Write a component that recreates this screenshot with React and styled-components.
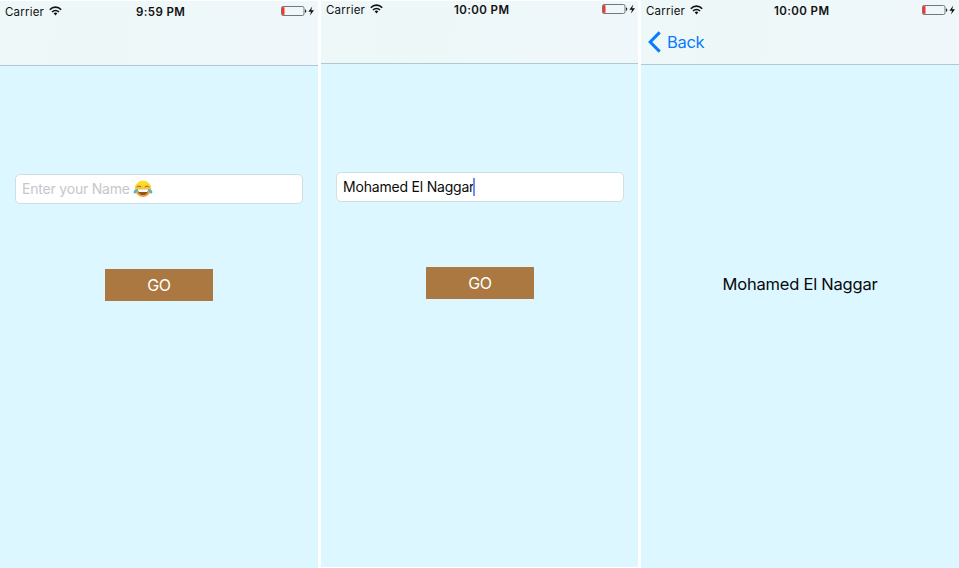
import React from "react";
import styled, { createGlobalStyle } from "styled-components";

const GlobalStyle = createGlobalStyle`
  * { box-sizing: border-box; }
  body { margin: 0; background: #fff; font-family: Inter, "Liberation Sans", sans-serif; overflow: hidden; }
`;

const Screens = styled.main`
  display: grid;
  grid-template-columns: 318px 317px 318px;
  column-gap: 3px;
  align-items: start;
  width: 959px;
  height: 568px;
`;

const Phone = styled.section`
  display: flex;
  flex-direction: column;
  align-items: flex-start;
  margin-top: ${(p) => p.$top}px;
  height: ${(p) => p.$height}px;
  background: #dcf7ff;
  overflow: hidden;
`;

const Header = styled.header`
  width: 100%;
  height: ${(p) => p.$height}px;
  flex: none;
  background: linear-gradient(100deg, #eef8f8, #eff7fa);
  border-bottom: 1px solid #b0c9d2;
`;

const StatusBar = styled.div`
  display: grid;
  grid-template-columns: 44px 87px 145px auto;
  align-items: center;
  height: 20px;
  padding-left: 5px;
  margin-top: ${(p) => p.$shift}px;
  color: #111;
  white-space: nowrap;
`;

const Carrier = styled.span`
  font-size: 11.5px;
  line-height: 18px;
  padding-top: 1px;
  letter-spacing: 0.2px;
`;

const Time = styled.span`
  font-size: 11.5px;
  font-weight: 600;
  line-height: 18px;
  padding-top: 1px;
  letter-spacing: 0.4px;
  margin-left: ${(p) => p.$offset}px;
`;

const Icon = styled.svg`
  display: block;
  flex: none;
`;

const BackButton = styled.button`
  display: flex;
  align-items: center;
  gap: 6px;
  height: 44px;
  margin: 0;
  padding: 0 0 0 7px;
  border: 0;
  background: none;
  color: #087cfb;
  font: 400 16.5px/44px Inter, sans-serif;
  letter-spacing: -0.3px;
`;

const Field = styled.div`
  display: flex;
  align-items: center;
  width: 288px;
  height: 30px;
  margin: 108px 0 0 15px;
  padding-left: 6px;
  background: #fff;
  border: 1px solid #d0dfe2;
  border-radius: 5px;
  white-space: nowrap;
`;

const FieldText = styled.span`
  font-size: 14px;
  line-height: 20px;
  letter-spacing: ${(p) => p.$track}px;
  margin-right: ${(p) => (p.$placeholder ? 3 : -1)}px;
  color: ${(p) => (p.$placeholder ? "#c5c7cb" : "#0b0b0b")};
`;

const Caret = styled.span`
  width: 2px;
  height: 18px;
  background: #6f8df3;
`;

const GoButton = styled.button`
  width: 108px;
  height: 32px;
  margin: 65px 0 0 105px;
  padding: 0;
  border: 0;
  background: #aa7840;
  color: #fff;
  font: 400 16px/32px Inter, sans-serif;
  letter-spacing: -0.4px;
`;

const Name = styled.p`
  width: 100%;
  margin: 209px 0 0;
  text-align: center;
  color: #07090a;
  font-size: 16.5px;
  line-height: 21px;
  letter-spacing: -0.22px;
`;

const Wifi = () => (
  <Icon width="13" height="10" viewBox="0 0 13 10">
    <g fill="none" stroke="#111" strokeWidth="1.6">
      <path d="M.8 3.7C3.9.3 9.1.3 12.2 3.7" />
      <path d="M3 6C5 4 8 4 10 6" />
    </g>
    <path d="M4.6 7.3Q6.5 5.9 8.4 7.3L6.5 9.4Z" fill="#111" />
  </Icon>
);

const Battery = () => (
  <Icon width="34" height="12" viewBox="0 0 34 12">
    <rect x=".5" y="1.5" width="22.5" height="9" rx="1.6" fill="none" stroke="#727878" />
    <path d="M1 2.2h2.5v7.6H1z" fill="#fb3328" />
    <path d="M24 4.2q1.3.4 1.3 1.8T24 7.8Z" fill="#222" />
    <path d="M31.2 1.5L27.4 6.7H30L29 10.5L33 5.3H30.2Z" fill="#111" />
  </Icon>
);

const Joy = () => (
  <Icon width="20" height="18" viewBox="0 0 20 18">
    <defs>
      <linearGradient id="joyFace" x2="0" y2="1">
        <stop stopColor="#ffe52e" />
        <stop offset=".6" stopColor="#fbc52b" />
        <stop offset="1" stopColor="#e9952b" />
      </linearGradient>
    </defs>
    <circle cx="10" cy="8.7" r="8.2" fill="url(#joyFace)" />
    <path d="M4.4 9.2H15.6Q15 15 10 15T4.4 9.2Z" fill="#8a5428" />
    <path d="M4.7 9.3H15.3Q14.8 11.6 14.2 12H5.8Q5.2 11.6 4.7 9.3Z" fill="#fff" />
    <path d="M4 6.8Q5.8 4.9 8 6.8M12 6.8Q14.2 4.9 16 6.8" fill="none" stroke="#9a6426" strokeWidth="1" strokeLinecap="round" />
    <path d="M4.6 9C2 9.2.2 11 .6 12.6C1 14.2 4.2 14 4.6 9ZM15.4 9C18 9.2 19.8 11 19.4 12.6C19 14.2 15.8 14 15.4 9Z" fill="#42b4e7" />
  </Icon>
);

const Chevron = () => (
  <Icon width="13" height="22" viewBox="0 0 13 22">
    <path d="M11.7 1.4L2.2 11L11.7 20.6" fill="none" stroke="#087cfb" strokeWidth="3" />
  </Icon>
);

const Status = ({ time, shift, offset }) => (
  <StatusBar $shift={shift}>
    <Carrier>Carrier</Carrier>
    <Wifi />
    <Time $offset={offset}>{time}</Time>
    <Battery />
  </StatusBar>
);

export default function App() {
  return (
    <>
      <GlobalStyle />
      <Screens>
        <Phone $top={1} $height={567}>
          <Header $height={65}>
            <Status time="9:59 PM" shift={0} offset={0} />
          </Header>
          <Field>
            <FieldText $placeholder $track={-0.2}>Enter your Name</FieldText>
            <Joy />
          </Field>
          <GoButton>GO</GoButton>
        </Phone>
        <Phone $top={1} $height={566}>
          <Header $height={63}>
            <Status time="10:00 PM" shift={-2} offset={-3} />
          </Header>
          <Field>
            <FieldText $track={-0.2}>Mohamed El Naggar</FieldText>
            <Caret />
          </Field>
          <GoButton>GO</GoButton>
        </Phone>
        <Phone $top={0} $height={568}>
          <Header $height={65}>
            <Status time="10:00 PM" shift={0} offset={-3} />
            <BackButton>
              <Chevron />
              Back
            </BackButton>
          </Header>
          <Name>Mohamed El Naggar</Name>
        </Phone>
      </Screens>
    </>
  );
}
